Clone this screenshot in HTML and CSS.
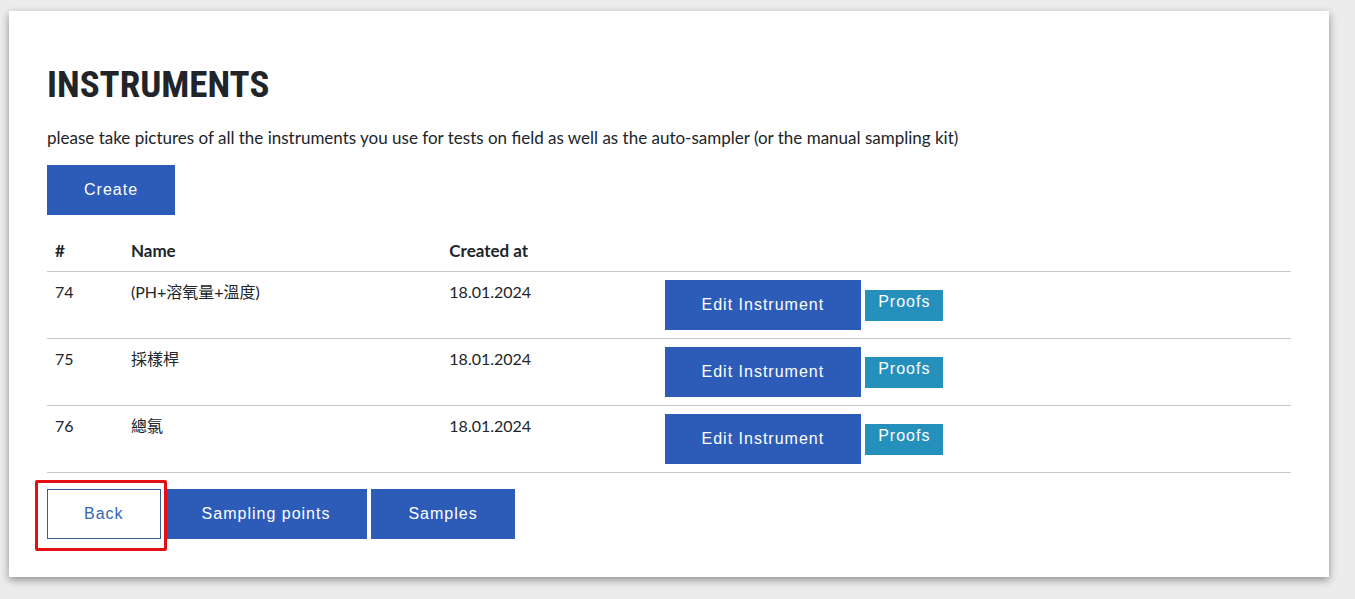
FILE: index.html
```html
<!DOCTYPE html>
<html lang="en">
<head>
<meta charset="utf-8">
<meta name="viewport" content="width=device-width, initial-scale=1">
<title>Instruments</title>
<link rel="stylesheet" href="styles.css">
</head>
<body>
<main class="card">
  <h1 class="title">INSTRUMENTS</h1>
  <p class="intro">please take pictures of all the instruments you use for tests on field as well as the auto-sampler (or the manual sampling kit)</p>
  <button type="button" class="btn">Create</button>
  <table class="table">
    <colgroup><col class="col-id"><col class="col-name"><col class="col-date"><col></colgroup>
    <thead>
      <tr><th scope="col">#</th><th scope="col">Name</th><th scope="col">Created at</th><td></td></tr>
    </thead>
    <tbody>
      <tr><td>74</td><td>(PH+溶氧量+溫度)</td><td>18.01.2024</td><td><div class="actions"><button type="button" class="btn">Edit Instrument</button><button type="button" class="btn-proofs">Proofs</button></div></td></tr>
      <tr><td>75</td><td>採樣桿</td><td>18.01.2024</td><td><div class="actions"><button type="button" class="btn">Edit Instrument</button><button type="button" class="btn-proofs">Proofs</button></div></td></tr>
      <tr><td>76</td><td>總氯</td><td>18.01.2024</td><td><div class="actions"><button type="button" class="btn">Edit Instrument</button><button type="button" class="btn-proofs">Proofs</button></div></td></tr>
    </tbody>
  </table>
  <nav class="actions">
    <span class="highlight"><button type="button" class="btn btn-outline">Back</button></span>
    <button type="button" class="btn">Sampling points</button>
    <button type="button" class="btn">Samples</button>
  </nav>
</main>
</body>
</html>
```
FILE: styles.css
```css
* { box-sizing: border-box; }
body {
  margin: 0;
  padding: 11px 26px 22px 9px;
  background: #ececec;
  color: #212529;
  font: 16px/24px Muli, Lato, "Noto Sans CJK TC", sans-serif;
}
.card {
  padding: 46px 38px 38px;
  background: #fff;
  box-shadow: 0 3px 8px rgba(0, 0, 0, 0.4);
}
.title {
  margin: 0 0 13px;
  font: 700 37px/56px "Roboto Condensed", Roboto, sans-serif;
}
.intro {
  margin: 0 0 15px;
  font-size: 17px;
}
.btn {
  display: block;
  height: 50px;
  padding: 0 36px;
  border: 1px solid #2c5cb8;
  background: #2c5cb8;
  color: #fff;
  font: 16px/24px "Liberation Sans", Arial, sans-serif;
  letter-spacing: 1px;
  white-space: nowrap;
}
.btn-outline {
  border-color: #365f91;
  background: #fff;
  color: #3567ae;
}
.btn-proofs {
  padding: 0 13px 7px;
  border: 0;
  background: #2590bc;
  color: #fff;
  font: 16px/24px "Liberation Sans", Arial, sans-serif;
  letter-spacing: 1px;
}
.table {
  width: 100%;
  margin: 16px 0;
  border-collapse: separate;
  border-spacing: 0;
  table-layout: fixed;
}
.table th, .table td {
  padding: 8px;
  border-bottom: 1px solid #c8c8c8;
  text-align: left;
  vertical-align: top;
}
.table th { font-size: 17px; }
.col-id { width: 6.1%; }
.col-name { width: 25.6%; }
.col-date { width: 17.3%; }
.actions {
  display: flex;
  align-items: center;
  gap: 4px;
}
.highlight { position: relative; }
.highlight::after {
  content: "";
  position: absolute;
  inset: -9px -6px -12px -12px;
  border: 3px solid #e30f13;
  border-radius: 2px;
  pointer-events: none;
}
```
